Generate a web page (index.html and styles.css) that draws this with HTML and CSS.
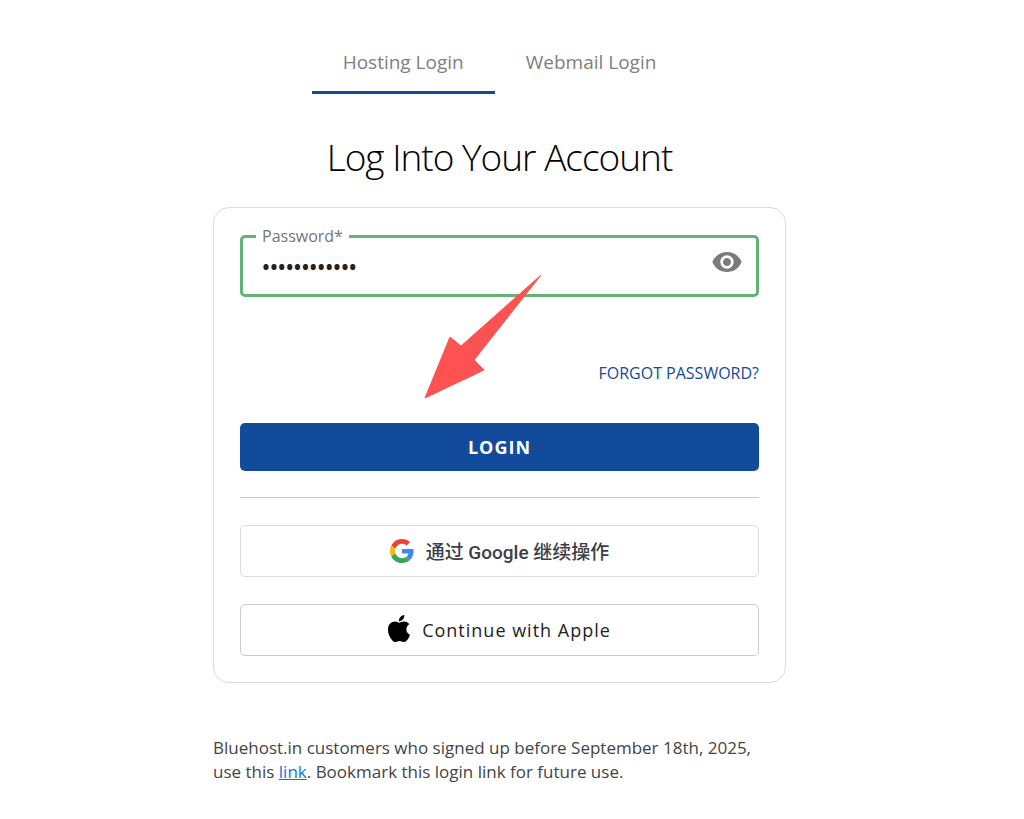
FILE: index.html
```html
<!DOCTYPE html>
<html lang="en">
<head>
    <meta charset="UTF-8">
    <meta name="viewport" content="width=device-width, initial-scale=1.0">
    <title>Log Into Your Account</title>
    <link rel="stylesheet" href="styles.css">
</head>
<body>
    <main class="login">
        <nav class="tabs">
            <a class="tab active" href="#hosting">Hosting Login</a>
            <a class="tab" href="#webmail">Webmail Login</a>
        </nav>
        <h1>Log Into Your Account</h1>
        <form class="card">
            <fieldset class="field">
                <legend><label for="password">Password*</label></legend>
                <div class="field-row">
                    <input type="password" id="password" value="bluehost2025">
                    <button type="button" class="toggle" aria-label="Show password">
                        <svg width="32" height="32" viewBox="0 0 24 24" fill="#7b7b7b">
                            <path d="M12 4.5C7 4.5 2.73 7.61 1 12c1.73 4.39 6 7.5 11 7.5s9.27-3.11 11-7.5c-1.73-4.39-6-7.5-11-7.5zM12 17c-2.76 0-5-2.24-5-5s2.24-5 5-5 5 2.24 5 5-2.24 5-5 5zm0-8c-1.66 0-3 1.34-3 3s1.34 3 3 3 3-1.34 3-3-1.34-3-3-3z"/>
                        </svg>
                    </button>
                </div>
            </fieldset>
            <a class="forgot" href="#forgot">FORGOT PASSWORD?</a>
            <button type="submit" class="btn btn-login">LOGIN</button>
            <hr>
            <button type="button" class="btn btn-google" lang="zh-CN">
                <svg width="24" height="24" viewBox="0 0 48 48">
                    <path fill="#EA4335" d="M24 9.5c3.54 0 6.71 1.22 9.21 3.6l6.85-6.85C35.9 2.38 30.47 0 24 0 14.62 0 6.51 5.38 2.56 13.22l7.98 6.19C12.43 13.72 17.74 9.5 24 9.5z"/>
                    <path fill="#4285F4" d="M46.98 24.55c0-1.57-.15-3.09-.38-4.55H24v9.02h12.94c-.58 2.96-2.26 5.48-4.78 7.18l7.73 6c4.51-4.18 7.09-10.36 7.09-17.65z"/>
                    <path fill="#FBBC05" d="M10.53 28.59c-.48-1.45-.76-2.99-.76-4.59s.27-3.14.76-4.59l-7.98-6.19C.92 16.46 0 20.12 0 24c0 3.88.92 7.54 2.56 10.78l7.97-6.19z"/>
                    <path fill="#34A853" d="M24 48c6.48 0 11.93-2.13 15.89-5.81l-7.73-6c-2.15 1.45-4.92 2.3-8.16 2.3-6.26 0-11.57-4.22-13.47-9.91l-7.98 6.19C6.51 42.62 14.62 48 24 48z"/>
                </svg>
                通过 Google 继续操作
            </button>
            <button type="button" class="btn btn-apple">
                <svg width="22" height="30" viewBox="0 0 814 1110">
                    <path d="M788.1 340.9c-5.8 4.5-108.2 62.2-108.2 190.5 0 148.4 130.3 200.9 134.2 202.2-.6 3.2-20.7 71.9-68.7 141.9-42.8 61.6-87.5 123.1-155.5 123.1s-85.5-39.5-164-39.5c-76.5 0-103.7 40.8-165.9 40.8s-105.6-57-155.5-127C46.7 790.7 0 663 0 541.8c0-194.4 126.4-297.5 250.8-297.5 66.1 0 121.2 43.4 162.7 43.4 39.5 0 101.1-46 176.3-46 28.5 0 130.9 2.6 198.3 99.2zm-234-181.5c31.1-36.9 53.1-88.1 53.1-139.3 0-7.1-.6-14.3-1.9-20.1-50.6 1.9-110.8 33.7-147.1 75.8-28.5 32.4-55.1 83.6-55.1 135.5 0 7.8 1.3 15.6 1.9 18.1 3.2.6 8.4 1.3 13.6 1.3 45.4 0 102.5-30.4 135.5-71.3z"/>
                </svg>
                Continue with Apple
            </button>
            <svg class="arrow" width="118" height="125" viewBox="0 0 118 125">
                <path fill="#fd5252" stroke="#fd5252" stroke-linejoin="round" d="M1 124L26 63L37 72L117 1L50 86L60 96Z"/>
            </svg>
        </form>
        <p class="note">Bluehost.in customers who signed up before September 18th, 2025, use this <a href="#link">link</a>. Bookmark this login link for future use.</p>
    </main>
</body>
</html>
```
FILE: styles.css
```css
* {
    margin: 0;
    padding: 0;
    box-sizing: border-box;
}
body {
    padding: 32px 25px 32px 0;
    background-color: #fff;
    font-family: "Open Sans", "Noto Sans CJK SC", sans-serif;
}
.login {
    max-width: 573px;
    margin: 0 auto;
}
.tabs {
    display: flex;
    justify-content: center;
}
.tab {
    padding: 17px 31px 15px;
    border-bottom: 3px solid transparent;
    color: #808080;
    font-size: 19px;
    line-height: 27px;
    text-decoration: none;
}
.tab.active {
    border-color: #124a9c;
}
h1 {
    margin: 35px 0 22px;
    color: #000;
    font-size: 37px;
    font-weight: 300;
    line-height: 56px;
    letter-spacing: -1px;
    text-align: center;
}
.card {
    position: relative;
    display: flex;
    flex-direction: column;
    padding: 20px 26px 26px;
    border: 1px solid #d8dbe2;
    border-radius: 16px;
}
.field {
    min-width: 0;
    height: 69px;
    padding: 0 13px 0 19px;
    border: 3px solid #63b376;
    border-radius: 5px;
}
legend {
    margin-left: -6px;
    padding: 0 6px;
    color: #757575;
    font-size: 16px;
    line-height: 17px;
}
.field-row {
    display: flex;
}
.field input {
    flex: 1;
    min-width: 0;
    padding-top: 6px;
    border: 0;
    outline: 0;
    background: none;
    color: #222;
    font-family: inherit;
    font-size: 21px;
    font-weight: 600;
    line-height: 32px;
}
.toggle {
    display: flex;
    padding-top: 1px;
    border: 0;
    background: none;
    cursor: pointer;
}
.forgot {
    align-self: flex-end;
    margin: 64px 0 38px;
    color: #124a9c;
    font-size: 16px;
    font-weight: 500;
    line-height: 24px;
    text-decoration: none;
}
.btn {
    display: flex;
    align-items: center;
    justify-content: center;
    gap: 12px;
    height: 52px;
    border: 1px solid #ccc;
    border-radius: 5px;
    background-color: #fff;
    font-family: inherit;
    font-size: 18px;
    cursor: pointer;
}
.btn-login {
    height: 48px;
    border: 0;
    background-color: #124a9c;
    color: #fff;
    font-weight: 700;
    letter-spacing: 1px;
}
hr {
    margin: 26px 0 27px;
    border: 0;
    border-top: 1px solid #c8c8c8;
}
.btn-google {
    margin-bottom: 27px;
    padding-bottom: 1px;
    border-color: #dadce0;
    color: #3c4043;
    font-family: Roboto, "Noto Sans CJK SC", sans-serif;
    font-size: 19px;
    font-weight: 500;
}
.btn-apple {
    color: #222;
    letter-spacing: 1px;
}
.arrow {
    position: absolute;
    top: 66px;
    left: 210px;
    pointer-events: none;
}
.note {
    margin-top: 53px;
    padding-right: 20px;
    color: #444;
    font-size: 17px;
    line-height: 24px;
}
.note a {
    color: #1a73e8;
}
```
